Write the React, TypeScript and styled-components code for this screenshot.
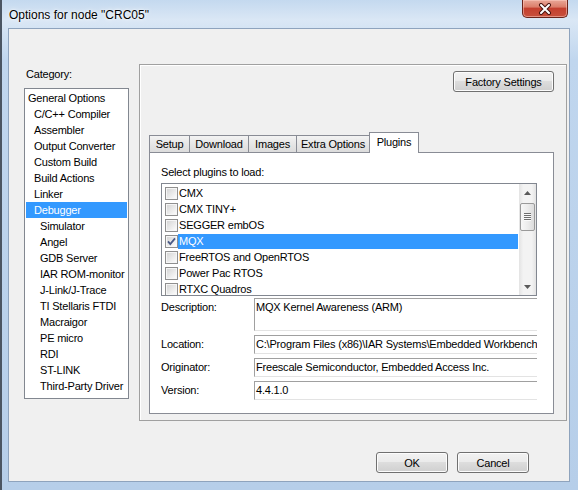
import React from "react";
import styled, { createGlobalStyle } from "styled-components";

const GlobalStyle = createGlobalStyle`
  html, body {
    margin: 0;
    padding: 0;
  }
  body {
    width: 578px;
    height: 490px;
    overflow: hidden;
    background: #3c4653;
    font-family: "Liberation Sans", Arial, sans-serif;
    font-size: 11px;
    letter-spacing: -0.2px;
    color: #000;
  }
`;

const Window = styled.div`
  box-sizing: border-box;
  width: 578px;
  height: 490px;
  display: flex;
  flex-direction: column;
  padding: 0 8px 8px 6px;
  border-left: 2px solid #4b5562;
  background: linear-gradient(180deg, #c4d9ef 0%, #dae7f5 20px, #c0d6ee 60px, #b6cee9 100%);
`;

const TitleBar = styled.div`
  flex: none;
  height: 28px;
  display: flex;
  justify-content: space-between;
  align-items: flex-start;
`;

const Title = styled.div`
  padding: 8px 0 0 1px;
  font-size: 12px;
  line-height: 14px;
  letter-spacing: 0;
  text-shadow: 0 0 5px #fff, 0 0 2px #fff;
`;

const CloseButton = styled.div`
  box-sizing: border-box;
  width: 46px;
  height: 18px;
  margin-right: 2px;
  border: 1px solid #6a241b;
  border-top: none;
  border-radius: 0 0 5px 5px;
  background: linear-gradient(180deg, #e9a797 0%, #dc7f6c 40%, #c4402f 50%, #c8503c 100%);
  box-shadow: inset 0 0 0 1px rgba(255, 210, 200, 0.5);
  display: flex;
  align-items: center;
  justify-content: center;
`;

const Client = styled.div`
  flex: 1;
  display: flex;
  flex-direction: column;
  background: #f0f0f0;
  border: 1px solid #8ea3bd;
`;

const Body = styled.div`
  display: flex;
  align-items: flex-start;
  gap: 10px;
  padding: 35px 0 0 15px;
`;

const LeftColumn = styled.div`
  width: 105px;
  margin-top: 4px;
  display: flex;
  flex-direction: column;
`;

const CategoryLabel = styled.div`
  padding-left: 2px;
  line-height: 13px;
  margin-bottom: 7px;
`;

const TreeList = styled.div`
  box-sizing: border-box;
  height: 311px;
  border: 1px solid #828790;
  background: #fff;
  padding-top: 1px;
`;

const TreeItem = styled.div<{ $level: number; $selected?: boolean }>`
  height: 16px;
  line-height: 16px;
  margin: 0 1px;
  padding-left: ${(p) => p.$level * 6 + 2}px;
  white-space: nowrap;
  background: ${(p) => (p.$selected ? "#3399ff" : "transparent")};
  color: ${(p) => (p.$selected ? "#fff" : "#000")};
`;

const Panel = styled.div`
  box-sizing: border-box;
  width: 428px;
  height: 357px;
  border: 1px solid #a0a0a0;
  box-shadow: inset 1px 1px 0 #fff;
  display: flex;
  flex-direction: column;
  padding: 6px 12px 6px 9px;
`;

const ButtonRow = styled.div`
  display: flex;
  justify-content: flex-end;
`;

const Button = styled.button<{ $width: number }>`
  box-sizing: border-box;
  width: ${(p) => p.$width}px;
  height: 21px;
  padding: 0;
  border: 1px solid #707070;
  border-radius: 3px;
  background: linear-gradient(180deg, #f2f2f2 0%, #ebebeb 45%, #dddddd 50%, #cfcfcf 100%);
  box-shadow: inset 0 0 0 1px #fcfcfc;
  font: inherit;
  letter-spacing: inherit;
  color: #000;
`;

const TabStrip = styled.div`
  margin-top: 40px;
  height: 20px;
  display: flex;
  align-items: flex-end;
  position: relative;
  z-index: 1;
`;

const Tab = styled.div<{ $width: number; $active?: boolean }>`
  box-sizing: border-box;
  width: ${(p) => p.$width}px;
  height: ${(p) => (p.$active ? 21 : 17)}px;
  margin-right: -1px;
  margin-bottom: ${(p) => (p.$active ? -1 : 0)}px;
  border: 1px solid #898c95;
  border-bottom: none;
  background: ${(p) =>
    p.$active ? "#fff" : "linear-gradient(180deg, #f3f3f3 0%, #e6e6e6 50%, #dcdcdc 100%)"};
  text-align: center;
  line-height: ${(p) => (p.$active ? 18 : 16)}px;
  white-space: nowrap;
`;

const TabPane = styled.div`
  box-sizing: border-box;
  width: 405px;
  height: 262px;
  border: 1px solid #898c95;
  background: #fff;
  padding: 13px 0 0 11px;
`;

const SectionLabel = styled.div`
  line-height: 13px;
  margin-bottom: 4px;
`;

const PluginList = styled.div`
  box-sizing: border-box;
  width: 376px;
  height: 113px;
  border: 1px solid #828790;
  display: flex;
  background: #fff;
`;

const PluginItems = styled.div`
  flex: 1;
  padding-top: 1px;
  overflow: hidden;
`;

const PluginRow = styled.div`
  height: 16px;
  display: flex;
  align-items: center;
  padding-left: 3px;
`;

const PluginName = styled.div<{ $selected?: boolean }>`
  flex: 1;
  height: 15px;
  line-height: 15px;
  padding-left: 1px;
  margin-right: 1px;
  white-space: nowrap;
  background: ${(p) => (p.$selected ? "#3399ff" : "transparent")};
  color: ${(p) => (p.$selected ? "#fff" : "#000")};
`;

const ScrollBar = styled.div`
  width: 17px;
  display: flex;
  flex-direction: column;
  background: linear-gradient(90deg, #e3e3e3 0%, #f3f3f3 25%, #f3f3f3 75%, #e3e3e3 100%);
`;

const ArrowBox = styled.div`
  height: 17px;
  display: flex;
  align-items: center;
  justify-content: center;
`;

const Track = styled.div`
  flex: 1;
  padding: 2px 1px 0;
`;

const Thumb = styled.div`
  box-sizing: border-box;
  height: 28px;
  border: 1px solid #9a9a9a;
  border-radius: 2px;
  background: linear-gradient(90deg, #f7f7f7 0%, #ececec 50%, #dcdcdc 100%);
  display: flex;
  align-items: center;
  justify-content: center;
`;

const Grip = styled.div`
  width: 7px;
  height: 8px;
  background: repeating-linear-gradient(180deg, #6f6f6f 0 1px, #fafafa 1px 2px);
`;

const InfoGrid = styled.div`
  margin-top: 2px;
  width: 376px;
  display: grid;
  grid-template-columns: 93px 283px;
  grid-template-rows: 33px 19px 19px 19px;
  row-gap: 4px;
`;

const InfoLabel = styled.div`
  line-height: 19px;
  white-space: nowrap;
`;

const Field = styled.div<{ $multi?: boolean }>`
  box-sizing: border-box;
  border-top: 1px solid #a0a0a0;
  border-left: 1px solid #a0a0a0;
  border-bottom: 1px solid #e3e3e3;
  padding: ${(p) => (p.$multi ? "2px 0 0 1px" : "0 0 0 1px")};
  line-height: ${(p) => (p.$multi ? 13 : 17)}px;
  white-space: nowrap;
  overflow: hidden;
`;

const Footer = styled.div`
  margin-top: auto;
  display: flex;
  justify-content: flex-end;
  gap: 9px;
  padding: 0 40px 8px 0;
`;

const categories: [string, number][] = [
  ["General Options", 0],
  ["C/C++ Compiler", 1],
  ["Assembler", 1],
  ["Output Converter", 1],
  ["Custom Build", 1],
  ["Build Actions", 1],
  ["Linker", 1],
  ["Debugger", 1],
  ["Simulator", 2],
  ["Angel", 2],
  ["GDB Server", 2],
  ["IAR ROM-monitor", 2],
  ["J-Link/J-Trace", 2],
  ["TI Stellaris FTDI", 2],
  ["Macraigor", 2],
  ["PE micro", 2],
  ["RDI", 2],
  ["ST-LINK", 2],
  ["Third-Party Driver", 2],
];

const tabs: [string, number][] = [
  ["Setup", 41],
  ["Download", 60],
  ["Images", 49],
  ["Extra Options", 74],
  ["Plugins", 50],
];

const plugins = [
  "CMX",
  "CMX TINY+",
  "SEGGER embOS",
  "MQX",
  "FreeRTOS and OpenRTOS",
  "Power Pac RTOS",
  "RTXC Quadros",
];

const CheckBox = ({ checked }: { checked?: boolean }) => (
  <svg width="13" height="13" viewBox="0 0 13 13" style={{ flex: "none" }}>
    <defs>
      <linearGradient id="cbfill" x1="0" y1="0" x2="1" y2="1">
        <stop offset="0" stopColor="#d6d6d6" />
        <stop offset="1" stopColor="#fbfbfb" />
      </linearGradient>
    </defs>
    <rect x="0.5" y="0.5" width="12" height="12" fill="#f6f6f6" stroke="#8f8f8f" />
    <rect x="2" y="2" width="9" height="9" fill="url(#cbfill)" />
    {checked && (
      <path d="M3 6.3 L5.3 9 L10 3.4" fill="none" stroke="#4a5a86" strokeWidth="1.8" />
    )}
  </svg>
);

const Arrow = ({ down }: { down?: boolean }) => (
  <svg width="7" height="4" viewBox="0 0 7 4">
    <path d={down ? "M0 0 H7 L3.5 4 Z" : "M0 4 H7 L3.5 0 Z"} fill="#5a5a5a" />
  </svg>
);

export default function App() {
  return (
    <>
      <GlobalStyle />
      <Window>
        <TitleBar>
          <Title>Options for node "CRC05"</Title>
          <CloseButton>
            <svg width="14" height="12" viewBox="0 0 14 12">
              <path d="M3 2 L11 10 M11 2 L3 10" stroke="#4a1510" strokeWidth="4" strokeLinecap="round" />
              <path d="M3 2 L11 10 M11 2 L3 10" stroke="#fff" strokeWidth="2" strokeLinecap="round" />
            </svg>
          </CloseButton>
        </TitleBar>
        <Client>
          <Body>
            <LeftColumn>
              <CategoryLabel>Category:</CategoryLabel>
              <TreeList>
                {categories.map(([name, level]) => (
                  <TreeItem key={name} $level={level} $selected={name === "Debugger"}>
                    {name}
                  </TreeItem>
                ))}
              </TreeList>
            </LeftColumn>
            <Panel>
              <ButtonRow>
                <Button $width={101}>Factory Settings</Button>
              </ButtonRow>
              <TabStrip>
                {tabs.map(([name, w]) => (
                  <Tab key={name} $width={w} $active={name === "Plugins"}>
                    {name}
                  </Tab>
                ))}
              </TabStrip>
              <TabPane>
                <SectionLabel>Select plugins to load:</SectionLabel>
                <PluginList>
                  <PluginItems>
                    {plugins.map((p) => (
                      <PluginRow key={p}>
                        <CheckBox checked={p === "MQX"} />
                        <PluginName $selected={p === "MQX"}>{p}</PluginName>
                      </PluginRow>
                    ))}
                  </PluginItems>
                  <ScrollBar>
                    <ArrowBox>
                      <Arrow />
                    </ArrowBox>
                    <Track>
                      <Thumb>
                        <Grip />
                      </Thumb>
                    </Track>
                    <ArrowBox>
                      <Arrow down />
                    </ArrowBox>
                  </ScrollBar>
                </PluginList>
                <InfoGrid>
                  <InfoLabel>Description:</InfoLabel>
                  <Field $multi>MQX Kernel Awareness (ARM)</Field>
                  <InfoLabel>Location:</InfoLabel>
                  <Field>C:\Program Files (x86)\IAR Systems\Embedded Workbench</Field>
                  <InfoLabel>Originator:</InfoLabel>
                  <Field>Freescale Semiconductor, Embedded Access Inc.</Field>
                  <InfoLabel>Version:</InfoLabel>
                  <Field>4.4.1.0</Field>
                </InfoGrid>
              </TabPane>
            </Panel>
          </Body>
          <Footer>
            <Button $width={72}>OK</Button>
            <Button $width={72}>Cancel</Button>
          </Footer>
        </Client>
      </Window>
    </>
  );
}
